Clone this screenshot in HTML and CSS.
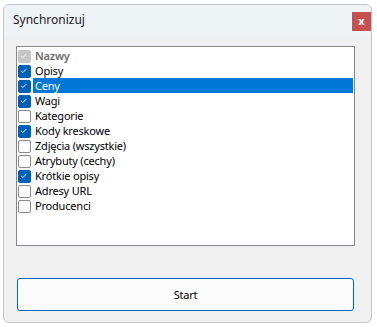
FILE: index.html
```html
<!DOCTYPE html>
<html lang="pl">
<head>
  <meta charset="UTF-8">
  <title>Synchronizuj</title>
  <link rel="stylesheet" href="styles.css">
</head>
<body>
  <div class="window">
    <div class="titlebar">
      <span class="title">Synchronizuj</span>
      <span class="close">x</span>
    </div>
    <div class="content">
      <ul class="listbox">
        <li class="item disabled"><span class="box checked"><svg viewBox="0 0 13 13"><polyline points="3.5,6.8 5.6,8.8 9.6,4.6"/></svg></span><span class="label">Nazwy</span></li>
        <li class="item"><span class="box checked"><svg viewBox="0 0 13 13"><polyline points="3.5,6.8 5.6,8.8 9.6,4.6"/></svg></span><span class="label">Opisy</span></li>
        <li class="item selected"><span class="box checked"><svg viewBox="0 0 13 13"><polyline points="3.5,6.8 5.6,8.8 9.6,4.6"/></svg></span><span class="label">Ceny</span></li>
        <li class="item"><span class="box checked"><svg viewBox="0 0 13 13"><polyline points="3.5,6.8 5.6,8.8 9.6,4.6"/></svg></span><span class="label">Wagi</span></li>
        <li class="item"><span class="box"></span><span class="label">Kategorie</span></li>
        <li class="item"><span class="box checked"><svg viewBox="0 0 13 13"><polyline points="3.5,6.8 5.6,8.8 9.6,4.6"/></svg></span><span class="label">Kody kreskowe</span></li>
        <li class="item"><span class="box"></span><span class="label">Zdjęcia (wszystkie)</span></li>
        <li class="item"><span class="box"></span><span class="label">Atrybuty (cechy)</span></li>
        <li class="item"><span class="box checked"><svg viewBox="0 0 13 13"><polyline points="3.5,6.8 5.6,8.8 9.6,4.6"/></svg></span><span class="label">Krótkie opisy</span></li>
        <li class="item"><span class="box"></span><span class="label">Adresy URL</span></li>
        <li class="item"><span class="box"></span><span class="label">Producenci</span></li>
      </ul>
      <button class="start">Start</button>
    </div>
  </div>
</body>
</html>
```

FILE: styles.css
```css
body {
  margin: 0;
  background: #fff;
  font-family: "Noto Sans", "Open Sans", sans-serif;
  font-size: 12px;
  color: #000;
}

.window {
  margin: 4px 0 0 3px;
  width: 367px;
  height: 317px;
  border: 1px solid #c4c4c4;
  border-radius: 6px;
  background: #f0f0f0;
  overflow: hidden;
}

.titlebar {
  height: 30px;
  background: #eef3f6;
  display: flex;
  align-items: center;
  justify-content: space-between;
  padding-left: 9px;
}

.title {
  font-size: 12px;
  color: #1a1a1a;
  margin-top: -2px;
}

.close {
  align-self: flex-start;
  margin-top: 7px;
  width: 19px;
  height: 19px;
  background: #c75050;
  color: #fff;
  font-weight: bold;
  font-size: 11px;
  line-height: 17px;
  text-align: center;
}

.content {
  padding: 11px 0 0 12px;
}

.listbox {
  list-style: none;
  margin: 0;
  padding: 1px 0 0 1px;
  width: 336px;
  height: 197px;
  border: 1px solid #858590;
  background: #fff;
}

.item {
  display: flex;
  align-items: flex-start;
  height: 15px;
  line-height: 15px;
}

.box {
  box-sizing: border-box;
  width: 13px;
  height: 13px;
  margin-top: 2px;
  border: 1px solid #8a8a8a;
  border-radius: 2px;
  background: #fdfdfd;
  display: flex;
}

.box.checked {
  background: #005fb8;
  border-color: #005fb8;
}

.box svg {
  width: 11px;
  height: 11px;
}

.box polyline {
  fill: none;
  stroke: #fff;
  stroke-width: 1.1;
  transform: translate(-1px, -1px);
}

.label {
  flex: 1;
  margin-left: 2px;
  margin-right: 1px;
  padding-left: 2px;
  font-size: 11px;
  letter-spacing: -0.2px;
}

.disabled .box.checked {
  background: #c5c5c5;
  border-color: #c5c5c5;
}

.disabled .label {
  color: #6d6d6d;
  font-weight: 600;
}

.selected .label {
  background: #0078d7;
  color: #fff;
}

.start {
  display: block;
  margin: 32px 0 0 1px;
  width: 337px;
  height: 33px;
  border: 1px solid #0067c0;
  border-radius: 3px;
  background: #fbfbfb;
  font-family: "Noto Sans", "Open Sans", sans-serif;
  font-size: 11px;
  letter-spacing: -0.2px;
  color: #000;
}
```
